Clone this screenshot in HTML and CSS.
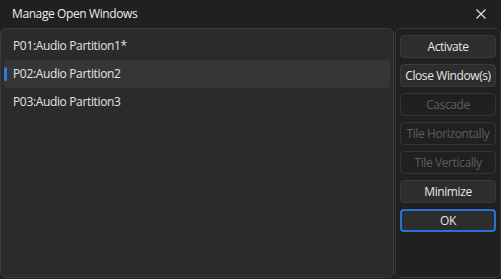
FILE: index.html
```html
<!DOCTYPE html>
<html lang="en">
<head>
  <meta charset="UTF-8">
  <title>Manage Open Windows</title>
  <link rel="stylesheet" href="styles.css">
</head>
<body>
  <div class="window">
    <div class="titlebar">
      <span class="title">Manage Open Windows</span>
      <svg class="close" width="10" height="10" viewBox="0 0 10 10">
        <path d="M0.5 0.5 L9.5 9.5 M9.5 0.5 L0.5 9.5" stroke="#e6e6e6" stroke-width="1.1" fill="none"/>
      </svg>
    </div>
    <div class="content">
      <div class="list">
        <div class="item">P01:Audio Partition1*</div>
        <div class="item selected">P02:Audio Partition2</div>
        <div class="item">P03:Audio Partition3</div>
      </div>
      <div class="side">
        <button class="btn">Activate</button>
        <button class="btn">Close Window(s)</button>
        <button class="btn" disabled>Cascade</button>
        <button class="btn" disabled>Tile Horizontally</button>
        <button class="btn" disabled>Tile Vertically</button>
        <button class="btn">Minimize</button>
        <button class="btn default">OK</button>
      </div>
    </div>
  </div>
</body>
</html>
```

FILE: styles.css
```css
body { margin: 0; background: #202020; font-family: "Open Sans", "Noto Sans", sans-serif; font-size: 12px; color: #e4e4e4; }
.window { width: 501px; height: 279px; background: #202020; display: flex; flex-direction: column; overflow: hidden; }
.titlebar { height: 28px; display: flex; align-items: center; justify-content: space-between; padding: 0 15px 0 12px; box-sizing: border-box; }
.title { color: #ececec; letter-spacing: -0.4px; margin-top: -1px; }
.close { margin-top: -1px; }
.content { display: flex; gap: 1px; height: 250px; }
.list { width: 394px; box-sizing: border-box; background: #2b2b2b; border: 1px solid #3a3a3a; border-radius: 6px; padding: 3px; }
.item { height: 28px; line-height: 28px; padding-left: 9px; border-radius: 4px; position: relative; letter-spacing: -0.35px; }
.item.selected { background: #363636; }
.item.selected::before { content: ""; position: absolute; left: 0; top: 7px; width: 3px; height: 14px; border-radius: 2px; background: #2f78e0; }
.side { width: 106px; box-sizing: border-box; border: 1px solid #383838; border-radius: 6px; padding: 6px 4px; display: flex; flex-direction: column; gap: 6px; }
.btn { height: 23px; width: 96px; box-sizing: border-box; background: #2d2d2d; border: 1px solid #3a3a3a; border-radius: 4px; color: #e6e6e6; font-family: inherit; font-size: 12px; padding: 0; letter-spacing: -0.4px; white-space: nowrap; }
.btn:disabled { background: #202020; border-color: #333; color: #5e5e5e; }
.btn.default { border: 2px solid #2c6fd8; height: 23px; }
```
